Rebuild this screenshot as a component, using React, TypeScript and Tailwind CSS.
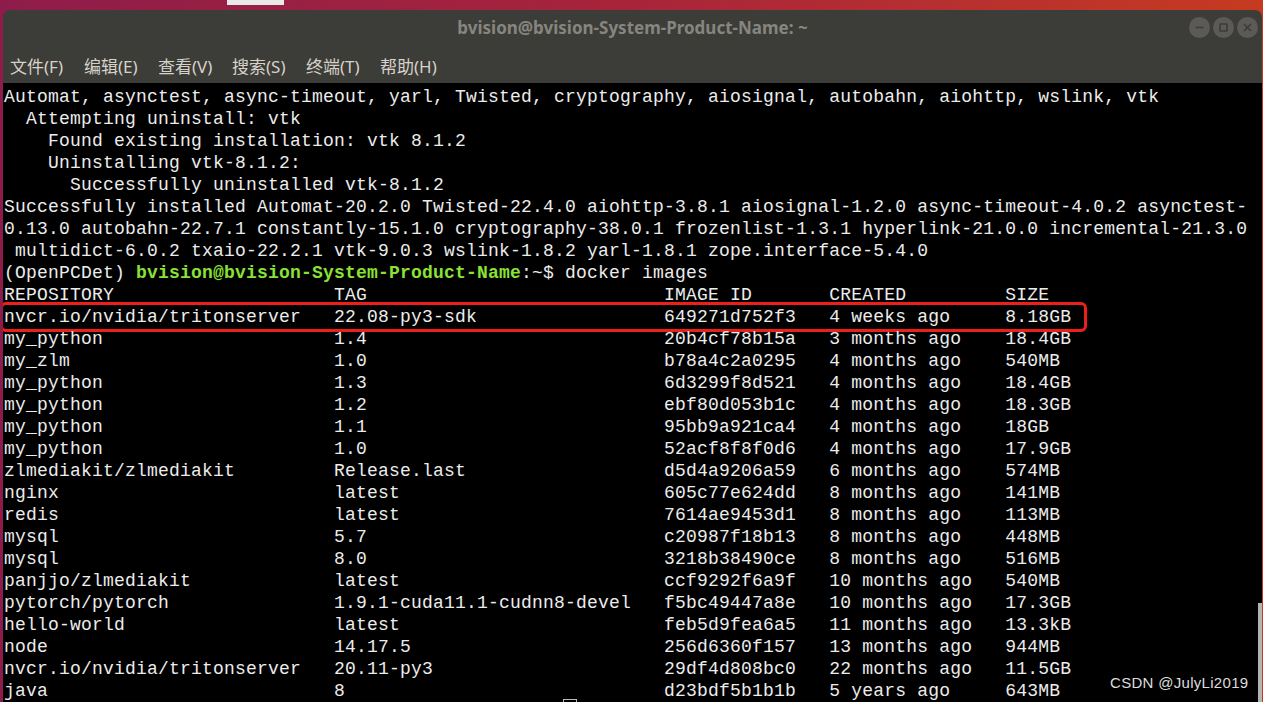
import React from "react";

const mono = "font-['Liberation_Mono','DejaVu_Sans_Mono',monospace] text-[18px] tracking-[0.2px] leading-[22px]";

const menus = ["文件(F)", "编辑(E)", "查看(V)", "搜索(S)", "终端(T)", "帮助(H)"];

const pipLines = [
  "Automat, asynctest, async-timeout, yarl, Twisted, cryptography, aiosignal, autobahn, aiohttp, wslink, vtk",
  "  Attempting uninstall: vtk",
  "    Found existing installation: vtk 8.1.2",
  "    Uninstalling vtk-8.1.2:",
  "      Successfully uninstalled vtk-8.1.2",
  "Successfully installed Automat-20.2.0 Twisted-22.4.0 aiohttp-3.8.1 aiosignal-1.2.0 async-timeout-4.0.2 asynctest-",
  "0.13.0 autobahn-22.7.1 constantly-15.1.0 cryptography-38.0.1 frozenlist-1.3.1 hyperlink-21.0.0 incremental-21.3.0",
  " multidict-6.0.2 txaio-22.2.1 vtk-9.0.3 wslink-1.8.2 yarl-1.8.1 zope.interface-5.4.0",
];

// docker images output
const images: string[][] = [
  ["nvcr.io/nvidia/tritonserver", "22.08-py3-sdk", "649271d752f3", "4 weeks ago", "8.18GB"],
  ["my_python", "1.4", "20b4cf78b15a", "3 months ago", "18.4GB"],
  ["my_zlm", "1.0", "b78a4c2a0295", "4 months ago", "540MB"],
  ["my_python", "1.3", "6d3299f8d521", "4 months ago", "18.4GB"],
  ["my_python", "1.2", "ebf80d053b1c", "4 months ago", "18.3GB"],
  ["my_python", "1.1", "95bb9a921ca4", "4 months ago", "18GB"],
  ["my_python", "1.0", "52acf8f8f0d6", "4 months ago", "17.9GB"],
  ["zlmediakit/zlmediakit", "Release.last", "d5d4a9206a59", "6 months ago", "574MB"],
  ["nginx", "latest", "605c77e624dd", "8 months ago", "141MB"],
  ["redis", "latest", "7614ae9453d1", "8 months ago", "113MB"],
  ["mysql", "5.7", "c20987f18b13", "8 months ago", "448MB"],
  ["mysql", "8.0", "3218b38490ce", "8 months ago", "516MB"],
  ["panjjo/zlmediakit", "latest", "ccf9292f6a9f", "10 months ago", "540MB"],
  ["pytorch/pytorch", "1.9.1-cuda11.1-cudnn8-devel", "f5bc49447a8e", "10 months ago", "17.3GB"],
  ["hello-world", "latest", "feb5d9fea6a5", "11 months ago", "13.3kB"],
  ["node", "14.17.5", "256d6360f157", "13 months ago", "944MB"],
  ["nvcr.io/nvidia/tritonserver", "20.11-py3", "29df4d808bc0", "22 months ago", "11.5GB"],
  ["java", "8", "d23bdf5b1b1b", "5 years ago", "643MB"],
];

const widths = [30, 30, 15, 16];
const fmt = (cols: string[]) =>
  cols.map((c, i) => (i < widths.length ? c.padEnd(widths[i]) : c)).join("");

const WinButton = ({ kind }: { kind: "min" | "max" | "close" }) => (
  <div className="w-[21px] h-[21px] rounded-full bg-[#5b5a56] flex items-center justify-center">
    <svg width="11" height="11" viewBox="0 0 11 11" fill="none" stroke="#3c3b37" strokeWidth="1.6">
      {kind === "min" && <path d="M1.5 5.5h8" />}
      {kind === "max" && <rect x="2" y="2" width="7" height="7" rx="0.5" />}
      {kind === "close" && <path d="M2 2l7 7M9 2l-7 7" />}
    </svg>
  </div>
);

export default function App() {
  return (
    <div className="w-[1263px] h-[702px] overflow-hidden relative bg-gradient-to-r from-[#8e1c4a] via-[#a8243a] to-[#c63a1f]">
      {/* desktop thing peeking at top */}
      <div className="absolute left-[227px] top-0 w-[57px] h-[5px] bg-[#e9e9e9]" />

      <div className="mt-[10px] ml-[3px] w-[1259px] h-[692px] flex flex-col rounded-t-[7px] overflow-hidden bg-[#3c3c38]">
        {/* title bar */}
        <div className="h-[36px] relative flex items-center justify-center">
          <span className="font-['Noto_Sans',sans-serif] font-bold text-[17px] text-[#86857f]">
            bvision@bvision-System-Product-Name: ~
          </span>
          <div className="absolute right-[4px] top-[7px] flex gap-[3px]">
            <WinButton kind="min" />
            <WinButton kind="max" />
            <WinButton kind="close" />
          </div>
        </div>

        {/* menu bar */}
        <div className="h-[37px] pt-[4px] pl-[7px] flex items-center font-['Noto_Sans','Noto_Sans_CJK_SC',sans-serif] text-[17px] text-[#d6d2ca]">
          {menus.map((m) => (
            <span key={m} className="w-[74px]">{m}</span>
          ))}
        </div>

        {/* terminal */}
        <div className={`flex-1 bg-black relative pt-[3px] pl-[1px] text-[#ececec] ${mono}`}>
          {pipLines.map((l, i) => (
            <div key={i} className="whitespace-pre h-[22px]">{l}</div>
          ))}
          <div className="whitespace-pre h-[22px]">
            (OpenPCDet) <span className="font-bold text-[#8ae234]">bvision@bvision-System-Product-Name</span>:~$ docker images
          </div>
          <div className="whitespace-pre h-[22px]">
            {fmt(["REPOSITORY", "TAG", "IMAGE ID", "CREATED", "SIZE"])}
          </div>
          {images.map((r, i) => (
            <div key={i} className="whitespace-pre h-[22px] relative">
              {fmt(r)}
              {i === 0 && (
                <div className="absolute left-[-4px] top-[-4px] w-[1087px] h-[30px] border-[3px] border-[#ee1f1b] rounded-[6px]" />
              )}
            </div>
          ))}

          {/* overlay scrollbar */}
          <div className="absolute right-0 top-[520px] bottom-0 w-[4px] bg-[#b4b4b4]" />
          {/* mouse cursor peeking */}
          <div className="absolute left-[560px] bottom-[-4px] w-[14px] h-[7px] border border-[#bcbcbc]" />
          {/* watermark */}
          <div className="absolute left-[1107px] bottom-[9px] font-['Liberation_Sans',sans-serif] text-[15px] leading-[20px] text-[#dcdcdc] tracking-[0.3px]">
            CSDN @JulyLi2019
          </div>
        </div>
      </div>
    </div>
  );
}
